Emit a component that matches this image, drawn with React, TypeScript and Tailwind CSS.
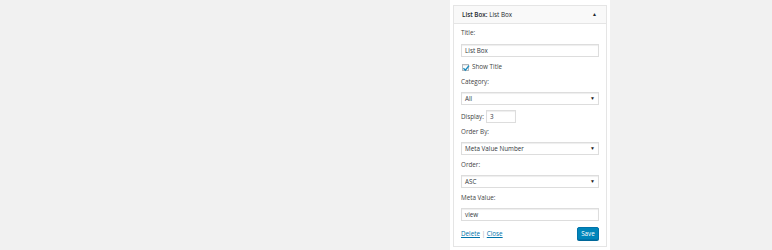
import React from "react";

function Label({ children, className = "" }: { children: React.ReactNode; className?: string }) {
  return <p className={`h-[8px] leading-[8px] text-[#444] ${className}`}>{children}</p>;
}

function TextInput({ value, className = "" }: { value: string; className?: string }) {
  return (
    <div
      className={`h-[13px] w-[138px] border border-[#ddd] bg-white pl-[3px] leading-[11px] text-[#32373c] shadow-[inset_0_1px_1px_rgba(0,0,0,0.07)] ${className}`}
    >
      {value}
    </div>
  );
}

function Select({ value, className = "" }: { value: string; className?: string }) {
  return (
    <div
      className={`flex h-[13px] w-[138px] items-center justify-between border border-[#ddd] bg-white pl-[3px] pr-[3px] text-[#32373c] shadow-[inset_0_1px_1px_rgba(0,0,0,0.07)] ${className}`}
    >
      <span className="leading-[11px]">{value}</span>
      <span className="text-[5px] leading-none text-[#222]">▼</span>
    </div>
  );
}

export default function App() {
  return (
    <div className="flex h-[250px] w-[772px] justify-start bg-[#f1f1f1] pl-[450px] font-['Open_Sans',sans-serif] text-[6.3px]">
      <div className="h-full w-[160px] bg-white pl-[3px] pt-[5px]">
        <div className="w-[154px] border border-[#e5e5e5] bg-white">
          {/* header */}
          <div className="flex h-[18px] items-center justify-between border-b border-[#e5e5e5] bg-[#f9f9f9] pl-[8px] pr-[9px] text-[#23282d]">
            <span>
              <span className="font-semibold">List Box:</span> List Box
            </span>
            <span className="text-[5px] leading-none">▲</span>
          </div>

          {/* form */}
          <div className="px-[7px] pt-[5px] pb-[6px]">
            <Label>Title:</Label>
            <TextInput value="List Box" className="mt-[7px]" />

            <div className="mt-[6px] flex h-[8px] items-center gap-[3px] pl-[1px] text-[#444]">
              <span className="relative h-[7px] w-[7px] border border-[#b4b9be] bg-white shadow-[inset_0_1px_1px_rgba(0,0,0,0.1)]">
                <svg viewBox="0 0 10 10" className="absolute -left-[1px] -top-[1px] h-[8px] w-[8px]">
                  <path d="M1.8 5.4 L4.2 7.8 L8.8 2" fill="none" stroke="#1e8cbe" strokeWidth="1.8" />
                </svg>
              </span>
              <span className="leading-[8px]">Show Title</span>
            </div>

            <Label className="mt-[7px]">Category:</Label>
            <Select value="All" className="mt-[6px]" />

            <div className="mt-[5px] flex h-[13px] items-center gap-[2px] text-[#444]">
              <span className="leading-[8px]">Display:</span>
              <div className="h-[13px] w-[30px] border border-[#ddd] bg-white pl-[3px] leading-[11px] text-[#32373c] shadow-[inset_0_1px_1px_rgba(0,0,0,0.07)]">
                3
              </div>
            </div>

            <Label className="mt-[5px]">Order By:</Label>
            <Select value="Meta Value Number" className="mt-[6px]" />

            <Label className="mt-[6px]">Order:</Label>
            <Select value="ASC" className="mt-[6px]" />

            <Label className="mt-[6px]">Meta Value:</Label>
            <TextInput value="view" className="mt-[6px]" />

            <div className="mt-[6px] flex h-[13px] w-[138px] items-center justify-between">
              <span className="leading-[8px] text-[#a0a5aa]">
                <a className="text-[#0073aa] underline">Delete</a> | <a className="text-[#0073aa] underline">Close</a>
              </span>
              <button className="h-[13px] w-[22px] rounded-[2px] border border-[#0073aa] bg-[#0085ba] leading-[11px] text-white shadow-[0_1px_0_#006799]">
                Save
              </button>
            </div>
          </div>
        </div>
      </div>
    </div>
  );
}
